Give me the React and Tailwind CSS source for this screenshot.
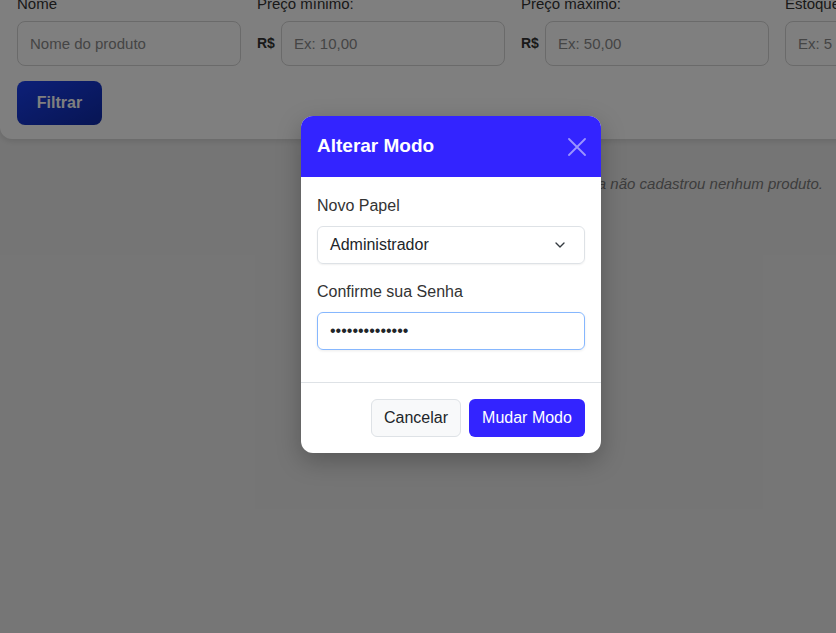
import { ChevronDown } from "lucide-react";

function Field({ label, placeholder, prefix }) {
  return (
    <div className="flex flex-col shrink-0">
      <label className="text-[15px] leading-[20px] text-[#333] mb-[7px]">{label}</label>
      <div className="flex items-center">
        {prefix && (
          <span className="w-[19px] mr-[5px] text-[14px] font-bold text-[#333]">{prefix}</span>
        )}
        <input
          className="w-[224px] h-[45px] rounded-lg border border-[#d4d4d4] px-3 text-[15px] text-[#333] placeholder:text-[#8a8a8a] outline-none bg-white"
          placeholder={placeholder}
        />
      </div>
    </div>
  );
}

export default function App() {
  return (
    <div
      className="relative w-[836px] h-[633px] overflow-hidden bg-[#ebebeb]"
      style={{ fontFamily: '"Liberation Sans", Arial, sans-serif' }}
    >
      {/* filter card */}
      <div className="-mt-[6px] w-[900px] bg-white rounded-b-xl shadow-[0_2px_6px_rgba(0,0,0,0.12)] px-[17px] pb-[14px]">
        <div className="flex gap-4">
          <Field label="Nome" placeholder="Nome do produto" />
          <Field label="Preço mínimo:" placeholder="Ex: 10,00" prefix="R$" />
          <Field label="Preço máximo:" placeholder="Ex: 50,00" prefix="R$" />
          <Field label="Estoque mínimo:" placeholder="Ex: 5" />
        </div>
        <button className="mt-[15px] h-[44px] w-[85px] rounded-lg bg-gradient-to-br from-[#1a40f0] to-[#0f2aa8] text-white font-bold text-[16px]">
          Filtrar
        </button>
      </div>

      <p className="mt-[34px] pr-[13px] text-right italic text-[15px] text-[#7a7a7a]">
        Você ainda não cadastrou nenhum produto.
      </p>

      {/* overlay */}
      <div className="absolute inset-0 bg-black/50" />

      {/* modal */}
      <div className="absolute left-[301px] top-[116px] w-[300px] rounded-xl overflow-hidden bg-white shadow-[0_8px_24px_rgba(0,0,0,0.25)]">
        <div className="h-[61px] bg-[#3324ff] flex items-center justify-between pl-4 pr-4">
          <h2 className="text-[19px] font-bold text-white">Alterar Modo</h2>
          <svg width="18" height="18" viewBox="0 0 18 18" className="mr-[-1px]">
            <path d="M1 1L17 17M17 1L1 17" stroke="#9b94ff" strokeWidth="1.8" strokeLinecap="round" />
          </svg>
        </div>
        <div className="px-4 pt-[17px] pb-8">
          <label className="block text-[16px] leading-6 text-[#333] mb-[8px]">Novo Papel</label>
          <div className="h-[38px] rounded-md border border-[#dee2e6] shadow-[0_1px_2px_rgba(0,0,0,0.06)] flex items-center justify-between pl-3 pr-4 text-[16px] text-[#212529]">
            <span>Administrador</span>
            <ChevronDown size={16} strokeWidth={2} className="text-[#343a40]" />
          </div>
          <label className="block mt-4 text-[16px] leading-6 text-[#333] mb-2">Confirme sua Senha</label>
          <input
            type="password"
            defaultValue="12345678901234"
            className="w-full h-[38px] rounded-md border border-[#86b7fe] shadow-[0_1px_3px_rgba(0,0,0,0.08)] px-3 text-[16px] text-[#212529] outline-none"
          />
        </div>
        <div className="border-t border-[#dee2e6] px-4 py-4 flex justify-end gap-2">
          <button className="h-[38px] w-[90px] rounded-md border border-[#dee2e6] bg-[#f8f9fa] text-[16px] text-[#212529]">
            Cancelar
          </button>
          <button className="h-[38px] w-[116px] rounded-md bg-[#3324ff] text-[16px] text-white">
            Mudar Modo
          </button>
        </div>
      </div>
    </div>
  );
}
